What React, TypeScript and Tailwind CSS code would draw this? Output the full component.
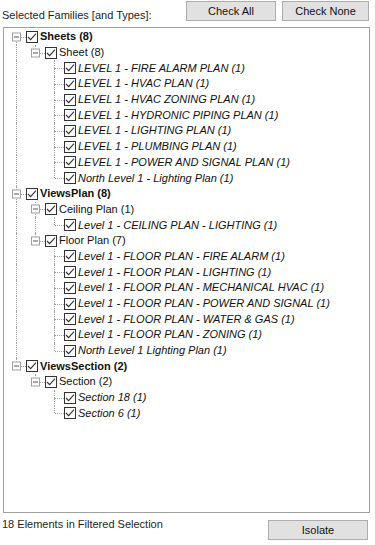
import React from 'react';

type TreeNode = {
  label: string;
  children?: TreeNode[];
};

const tree: TreeNode[] = [
  {
    label: 'Sheets (8)',
    children: [
      {
        label: 'Sheet (8)',
        children: [
          { label: 'LEVEL 1 - FIRE ALARM PLAN (1)' },
          { label: 'LEVEL 1 - HVAC PLAN (1)' },
          { label: 'LEVEL 1 - HVAC ZONING PLAN (1)' },
          { label: 'LEVEL 1 - HYDRONIC PIPING PLAN (1)' },
          { label: 'LEVEL 1 - LIGHTING PLAN (1)' },
          { label: 'LEVEL 1 - PLUMBING PLAN (1)' },
          { label: 'LEVEL 1 - POWER AND SIGNAL PLAN (1)' },
          { label: 'North Level 1 - Lighting Plan (1)' },
        ],
      },
    ],
  },
  {
    label: 'ViewsPlan (8)',
    children: [
      {
        label: 'Ceiling Plan (1)',
        children: [{ label: 'Level 1 - CEILING PLAN - LIGHTING (1)' }],
      },
      {
        label: 'Floor Plan (7)',
        children: [
          { label: 'Level 1 - FLOOR PLAN - FIRE ALARM (1)' },
          { label: 'Level 1 - FLOOR PLAN - LIGHTING (1)' },
          { label: 'Level 1 - FLOOR PLAN - MECHANICAL HVAC (1)' },
          { label: 'Level 1 - FLOOR PLAN - POWER AND SIGNAL (1)' },
          { label: 'Level 1 - FLOOR PLAN - WATER & GAS (1)' },
          { label: 'Level 1 - FLOOR PLAN - ZONING (1)' },
          { label: 'North Level 1 Lighting Plan (1)' },
        ],
      },
    ],
  },
  {
    label: 'ViewsSection (2)',
    children: [
      {
        label: 'Section (2)',
        children: [{ label: 'Section 18 (1)' }, { label: 'Section 6 (1)' }],
      },
    ],
  },
];

type Row = {
  label: string;
  level: number;
  hasChildren: boolean;
  isFirstRoot: boolean;
  hasNext: boolean;
  // for each ancestor level: does a line pass through
  guides: boolean[];
};

const flatten = (nodes: TreeNode[], level: number, guides: boolean[], rows: Row[]) => {
  nodes.forEach((n, i) => {
    const hasNext = i < nodes.length - 1;
    rows.push({
      label: n.label,
      level,
      hasChildren: !!n.children?.length,
      isFirstRoot: level === 0 && i === 0,
      hasNext,
      guides,
    });
    if (n.children) flatten(n.children, level + 1, [...guides, hasNext], rows);
  });
  return rows;
};

const rows = flatten(tree, 0, [], []);

const CheckBox = () => (
  <svg width="12" height="12" viewBox="0 0 12 12" className="shrink-0">
    <rect x="0.5" y="0.5" width="11" height="11" fill="#fff" stroke="#333" />
    <path d="M2 6 L4.6 8.6 L10 2.6" fill="none" stroke="#333" strokeWidth="1.1" />
  </svg>
);

const Expander = () => (
  <div className="absolute left-[5px] top-1/2 -translate-y-1/2 w-[9px] h-[9px] border border-[#a0a0a0] bg-white flex items-center justify-center">
    <div className="w-[5px] h-px bg-[#555]" />
  </div>
);

const TreeRow = ({ row }: { row: Row }) => {
  const textClass =
    row.level === 0 ? 'font-bold' : row.level === 2 ? 'italic' : '';
  return (
    <div className="flex items-center h-[15.7px]">
      {row.guides.map((g, i) => (
        <div key={i} className="relative w-[19px] h-full shrink-0">
          {g && <div className="absolute left-[9px] top-0 bottom-0 border-l border-dotted border-[#a0a0a0]" />}
        </div>
      ))}
      <div className="relative w-[19px] h-full shrink-0">
        {!row.isFirstRoot && (
          <div className="absolute left-[9px] top-0 h-1/2 border-l border-dotted border-[#a0a0a0]" />
        )}
        {row.hasNext && (
          <div className="absolute left-[9px] top-1/2 bottom-0 border-l border-dotted border-[#a0a0a0]" />
        )}
        <div className="absolute left-[10px] right-0 top-1/2 border-t border-dotted border-[#a0a0a0]" />
        {row.hasChildren && <Expander />}
      </div>
      <CheckBox />
      <span className={`ml-[2px] whitespace-nowrap text-[11px] leading-none text-[#111] ${textClass}`}>
        {row.label}
      </span>
    </div>
  );
};

const WinButton = ({ label, className }: { label: string; className?: string }) => (
  <button
    className={`h-[20px] bg-[#e1e1e1] border border-[#adadad] text-[11px] text-[#111] leading-none flex items-center justify-center ${className ?? ''}`}
  >
    {label}
  </button>
);

export default function App() {
  return (
    <div
      className="w-[375px] h-[545px] bg-white overflow-hidden"
      style={{ fontFamily: '"Liberation Sans", Arial, sans-serif' }}
    >
      <div className="flex items-start justify-between pt-[1px] pr-[6px]">
        <p className="mt-[9px] ml-[2px] text-[11px] leading-none text-[#1e1e1e]">
          Selected Families [and Types]:
        </p>
        <div className="flex gap-[6px]">
          <WinButton label="Check All" className="w-[90px]" />
          <WinButton label="Check None" className="w-[87px]" />
        </div>
      </div>
      <div className="ml-[3px] mt-[6px] w-[367px] h-[486px] border border-[#a0a0a0] bg-white pl-[3px] pt-[1px]">
        {rows.map((r, i) => (
          <TreeRow key={i} row={r} />
        ))}
      </div>
      <div className="flex items-start justify-between pr-[7px]">
        <p className="mt-[6px] ml-[2px] text-[11px] leading-none text-[#1e1e1e]">
          18 Elements in Filtered Selection
        </p>
        <WinButton label="Isolate" className="w-[100px] mt-[7px]" />
      </div>
    </div>
  );
}
